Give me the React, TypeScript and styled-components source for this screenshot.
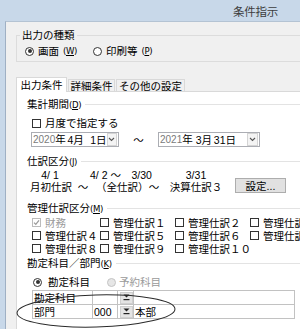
import React from "react"
import styled, { createGlobalStyle } from "styled-components"

const GlobalStyle = createGlobalStyle`
  body {
    margin: 0;
    font-family: "Liberation Sans", "Noto Sans CJK JP", sans-serif;
    font-size: 10.5px;
    color: #000;
  }
`

const Frame = styled.div`
  position: relative;
  width: 300px;
  height: 329px;
  overflow: hidden;

  display: flex;
  flex-direction: column;

  background: #c8d8e9;
`

const TitleBar = styled.div`
  flex: none;
  height: 21px;

  display: flex;
  justify-content: flex-end;
  align-items: center;

  padding-right: 22px;

  font-size: 11.5px;
  letter-spacing: -0.25px;
  color: #3d3d3d;
`

const Body = styled.div`
  flex: 1;
  min-height: 0;

  display: flex;
  flex-direction: column;

  margin-left: 5px;
  padding: 7px 0 0 10px;

  background: #f0f0f0;
  border-left: 1px solid #9fb0c4;
  border-top: 1px solid #b4c3d3;
`

const GroupBox = styled.fieldset`
  margin: 0 -20px 0 0;
  padding: 4px 0 4px 0;
  min-width: 0;

  border: 1px solid #dcdcdc;
`

const Legend = styled.legend`
  margin-left: 3px;
  padding: 0 2px;

  line-height: 12px;
`

const Key = styled.span`
  font-family: "DejaVu Sans Condensed", "Liberation Sans", sans-serif;
  font-size: 9.5px;
  letter-spacing: -0.4px;

  u {
    text-underline-offset: 1px;
  }
`

const OptionRow = styled.div`
  display: flex;
  align-items: center;

  height: 12px;
  margin-top: ${ p => p.$mt ?? 0 }px;
  padding-left: ${ p => p.$indent }px;
`

const Option = styled.label`
  display: flex;
  align-items: center;
  gap: ${ p => p.$gap ?? 4 }px;

  width: ${ p => p.$w ? p.$w + "px" : "auto" };

  line-height: 12px;
  white-space: nowrap;

  color: ${ p => p.$disabled ? "#9a9a9a" : "#000" };
`

const Radio = styled.span`
  position: relative;
  flex: none;

  width: 9px;
  height: 9px;

  border: 1px solid ${ p => p.$disabled ? "#c4c4c4" : "#333" };
  border-radius: 50%;
  background: ${ p => p.$disabled ? "#e6e6e6" : "#fff" };
  box-sizing: border-box;

  &::after {
    content: "";
    display: ${ p => p.$checked ? "block" : "none" };
    position: absolute;
    left: 1.5px;
    top: 1.5px;
    width: 4px;
    height: 4px;
    border-radius: 50%;
    background: #333;
  }
`

const CheckBox = styled.span`
  flex: none;
  display: flex;
  justify-content: center;
  align-items: center;

  width: 9px;
  height: 9px;

  border: 1px solid ${ p => p.$disabled ? "#bcbcbc" : "#333" };
  background: #fff;
  box-sizing: border-box;

  svg {
    display: block;
  }
`

const TabStrip = styled.div`
  position: relative;
  z-index: 1;

  display: flex;
  align-items: flex-end;

  height: 15px;
  margin-top: 15px;
`

const Tab = styled.div`
  display: flex;
  justify-content: center;
  align-items: center;

  width: ${ p => p.$w }px;
  height: ${ p => p.$active ? 15 : 13 }px;
  margin-right: 1px;

  box-sizing: border-box;
  border: 1px solid #d9d9d9;
  border-bottom: ${ p => p.$active ? "none" : "1px solid #d9d9d9" };
  background: ${ p => p.$active ? "#fff" : "#f0f0f0" };

  line-height: 12px;
  white-space: nowrap;
`

const Panel = styled.div`
  flex: 1;

  display: flex;
  flex-direction: column;

  margin-top: -1px;
  padding-left: 10px;

  background: #fff;
  border-top: 1px solid #d9d9d9;
  border-left: 1px solid #d9d9d9;
`

const SectionHead = styled.div`
  display: flex;
  align-items: center;
  gap: 4px;

  height: 12px;
  margin-top: ${ p => p.$mt }px;

  line-height: 12px;
  white-space: nowrap;

  &::after {
    content: "";
    flex: 1;
    height: 1px;
    background: #e3e3e3;
  }
`

const DateRow = styled.div`
  display: flex;
  align-items: center;

  height: 15px;
  margin-top: 3px;
  padding-left: 4px;
`

const Combo = styled.div`
  display: flex;
  align-items: center;

  width: ${ p => p.$w }px;
  height: 15px;

  box-sizing: border-box;
  border: 1px solid #abadb3;
  background: #fff;

  line-height: 12px;
  white-space: nowrap;
`

const YearPart = styled.span`
  width: 31px;
  padding-left: 1px;
`

const Digits = styled.span`
  font-size: 10px;
  color: #7a7a7a;
`

const DatePart = styled.span`
  width: ${ p => p.$w }px;
  text-align: right;
`

const DropButton = styled.span`
  display: flex;
  justify-content: center;
  align-items: center;

  width: 9px;
  height: 11px;
  margin: 0 1px 0 auto;

  border: 1px solid #d4d4d4;
  background: #f4f4f4;
`

const Tilde = styled.span`
  width: 39px;
  text-align: center;
`

const SplitGrid = styled.div`
  display: grid;
  grid-template-columns: 40px 26px 48px 20px 64px 58px;
  grid-template-rows: 12px 12px;

  margin: 2px 0 0 3px;

  line-height: 12px;
  white-space: nowrap;
`

const Cell = styled.span`
  grid-column: ${ p => p.$col };
  grid-row: ${ p => p.$row };

  text-align: ${ p => p.$align ?? "center" };
  padding-left: ${ p => p.$pl ?? 0 }px;
`

const Button = styled.button`
  grid-column: 6;
  grid-row: 1 / 3;
  align-self: end;

  height: 15px;
  margin: 0 0 0 7px;
  padding: 0;

  font: inherit;
  line-height: 12px;
  color: #000;

  border: 1px solid #adadad;
  background: #e1e1e1;
`

const CheckGrid = styled.div`
  display: grid;
  grid-template-columns: 68px 75px 75px 75px;
  grid-auto-rows: 13px;

  margin: 2px 0 0 5px;
`

const Table = styled.div`
  display: grid;
  grid-template-columns: 60px 25px 16px 161px;
  grid-auto-rows: 14px;

  width: 262px;
  margin: 2px 0 0 5px;

  border-top: 1px solid #c2c2c2;
  border-left: 1px solid #c2c2c2;
  line-height: 12px;
`

const TCell = styled.div`
  display: flex;
  align-items: center;

  padding-left: 1px;

  border-right: 1px solid #c2c2c2;
  border-bottom: 1px solid #c2c2c2;
  white-space: nowrap;
  overflow: hidden;
`

const PickButton = styled.span`
  display: flex;
  justify-content: center;
  align-items: center;

  width: 11px;
  height: 10px;
  margin-left: 1px;

  background: #e4e4e4;
  border: 1px solid #cfcfcf;
`

const Annotation = styled.svg`
  position: absolute;
  left: 0;
  top: 0;
  pointer-events: none;
`

const Chevron = () => (
  <svg width="7" height="5" viewBox="0 0 7 5">
    <path d="M1 1 L3.5 3.5 L6 1" fill="none" stroke="#555" strokeWidth="1.1" />
  </svg>
)

const PickIcon = () => (
  <svg width="7" height="7" viewBox="0 0 7 7">
    <path d="M0.5 0.5 H6.5 L3.5 3.5 Z" fill="#222" />
    <rect x="0.5" y="5" width="6" height="1.2" fill="#222" />
  </svg>
)

const Mn: React.FC<{ k: string }> = ({ k }) => (
  <Key>(<u>{ k }</u>)</Key>
)

const Check: React.FC<{ label: string; checked?: boolean; disabled?: boolean }> = ({ label, checked, disabled }) => (
  <Option $disabled={ disabled } $gap={ 4 }>
    <CheckBox $disabled={ disabled }>
      { checked && (
        <svg width="7" height="7" viewBox="0 0 7 7">
          <path d="M1 3.6 L2.8 5.4 L6 1.4" fill="none" stroke="#9a9a9a" strokeWidth="1.3" />
        </svg>
      ) }
    </CheckBox>
    { label }
  </Option>
)

const DateCombo: React.FC<{ w: number; year: string; month: string; day: string }> = ({ w, year, month, day }) => (
  <Combo $w={ w }>
    <YearPart><Digits>{ year }</Digits>年</YearPart>
    <DatePart $w={ 21 }>{ month }月</DatePart>
    <DatePart $w={ 24 }>{ day }日</DatePart>
    <DropButton><Chevron /></DropButton>
  </Combo>
)

const journals = [
  { label: "財務", checked: true, disabled: true },
  { label: "管理仕訳１" },
  { label: "管理仕訳２" },
  { label: "管理仕訳３" },
  { label: "管理仕訳４" },
  { label: "管理仕訳５" },
  { label: "管理仕訳６" },
  { label: "管理仕訳７" },
  { label: "管理仕訳８" },
  { label: "管理仕訳９" },
  { label: "管理仕訳１０" },
]

const App: React.FC = () => {
  return (
    <Frame>
      <GlobalStyle />
      <TitleBar>条件指示</TitleBar>

      <Body>
        <GroupBox>
          <Legend>出力の種類</Legend>
          <OptionRow $indent={ 8 }>
            <Option $w={ 68 }><Radio $checked />画面<Mn k="W" /></Option>
            <Option><Radio />印刷等<Mn k="P" /></Option>
          </OptionRow>
        </GroupBox>

        <TabStrip>
          <Tab $w={ 51 } $active>出力条件</Tab>
          <Tab $w={ 47 }>詳細条件</Tab>
          <Tab $w={ 69 }>その他の設定</Tab>
        </TabStrip>

        <Panel>
          <SectionHead $mt={ 6 }><span>集計期間<Mn k="D" /></span></SectionHead>
          <OptionRow $indent={ 5 } $mt={ 7 }>
            <Check label="月度で指定する" />
          </OptionRow>
          <DateRow>
            <DateCombo w={ 88 } year="2020" month="4" day="1" />
            <Tilde>〜</Tilde>
            <DateCombo w={ 102 } year="2021" month="3" day="31" />
          </DateRow>

          <SectionHead $mt={ 8 }><span>仕訳区分<Mn k="J" /></span></SectionHead>
          <SplitGrid>
            <Cell $col={ 1 } $row={ 1 }>4/ 1</Cell>
            <Cell $col="2 / 5" $row={ 1 } $align="left" $pl={ 20 }>4/ 2 〜　3/30</Cell>
            <Cell $col={ 5 } $row={ 1 }>3/31</Cell>
            <Cell $col={ 1 } $row={ 2 }>月初仕訳</Cell>
            <Cell $col={ 2 } $row={ 2 }>〜</Cell>
            <Cell $col={ 3 } $row={ 2 }>（全仕訳）</Cell>
            <Cell $col={ 4 } $row={ 2 }>〜</Cell>
            <Cell $col={ 5 } $row={ 2 }>決算仕訳３</Cell>
            <Button>設定...</Button>
          </SplitGrid>

          <SectionHead $mt={ 9 }><span>管理仕訳区分<Mn k="M" /></span></SectionHead>
          <CheckGrid>
            { journals.map(j => (
              <Check key={ j.label } label={ j.label } checked={ j.checked } disabled={ j.disabled } />
            )) }
          </CheckGrid>

          <SectionHead $mt={ 2 }><span>勘定科目／部門<Mn k="K" /></span></SectionHead>
          <OptionRow $indent={ 6 } $mt={ 7 }>
            <Option $w={ 74 } $gap={ 6 }><Radio $checked />勘定科目</Option>
            <Option $disabled $gap={ 3 }><Radio $disabled />予約科目</Option>
          </OptionRow>

          <Table>
            <TCell>勘定科目</TCell>
            <TCell />
            <TCell><PickButton><PickIcon /></PickButton></TCell>
            <TCell />
            <TCell>部門</TCell>
            <TCell>000</TCell>
            <TCell><PickButton><PickIcon /></PickButton></TCell>
            <TCell>本部</TCell>
          </Table>
        </Panel>
      </Body>

      <Annotation width="300" height="329" viewBox="0 0 300 329">
        <ellipse cx="96" cy="311" rx="79" ry="16" fill="none" stroke="#2a2a2a" strokeWidth="1" transform="rotate(-1.5 96 311)" />
      </Annotation>
    </Frame>
  )
}

export default App
